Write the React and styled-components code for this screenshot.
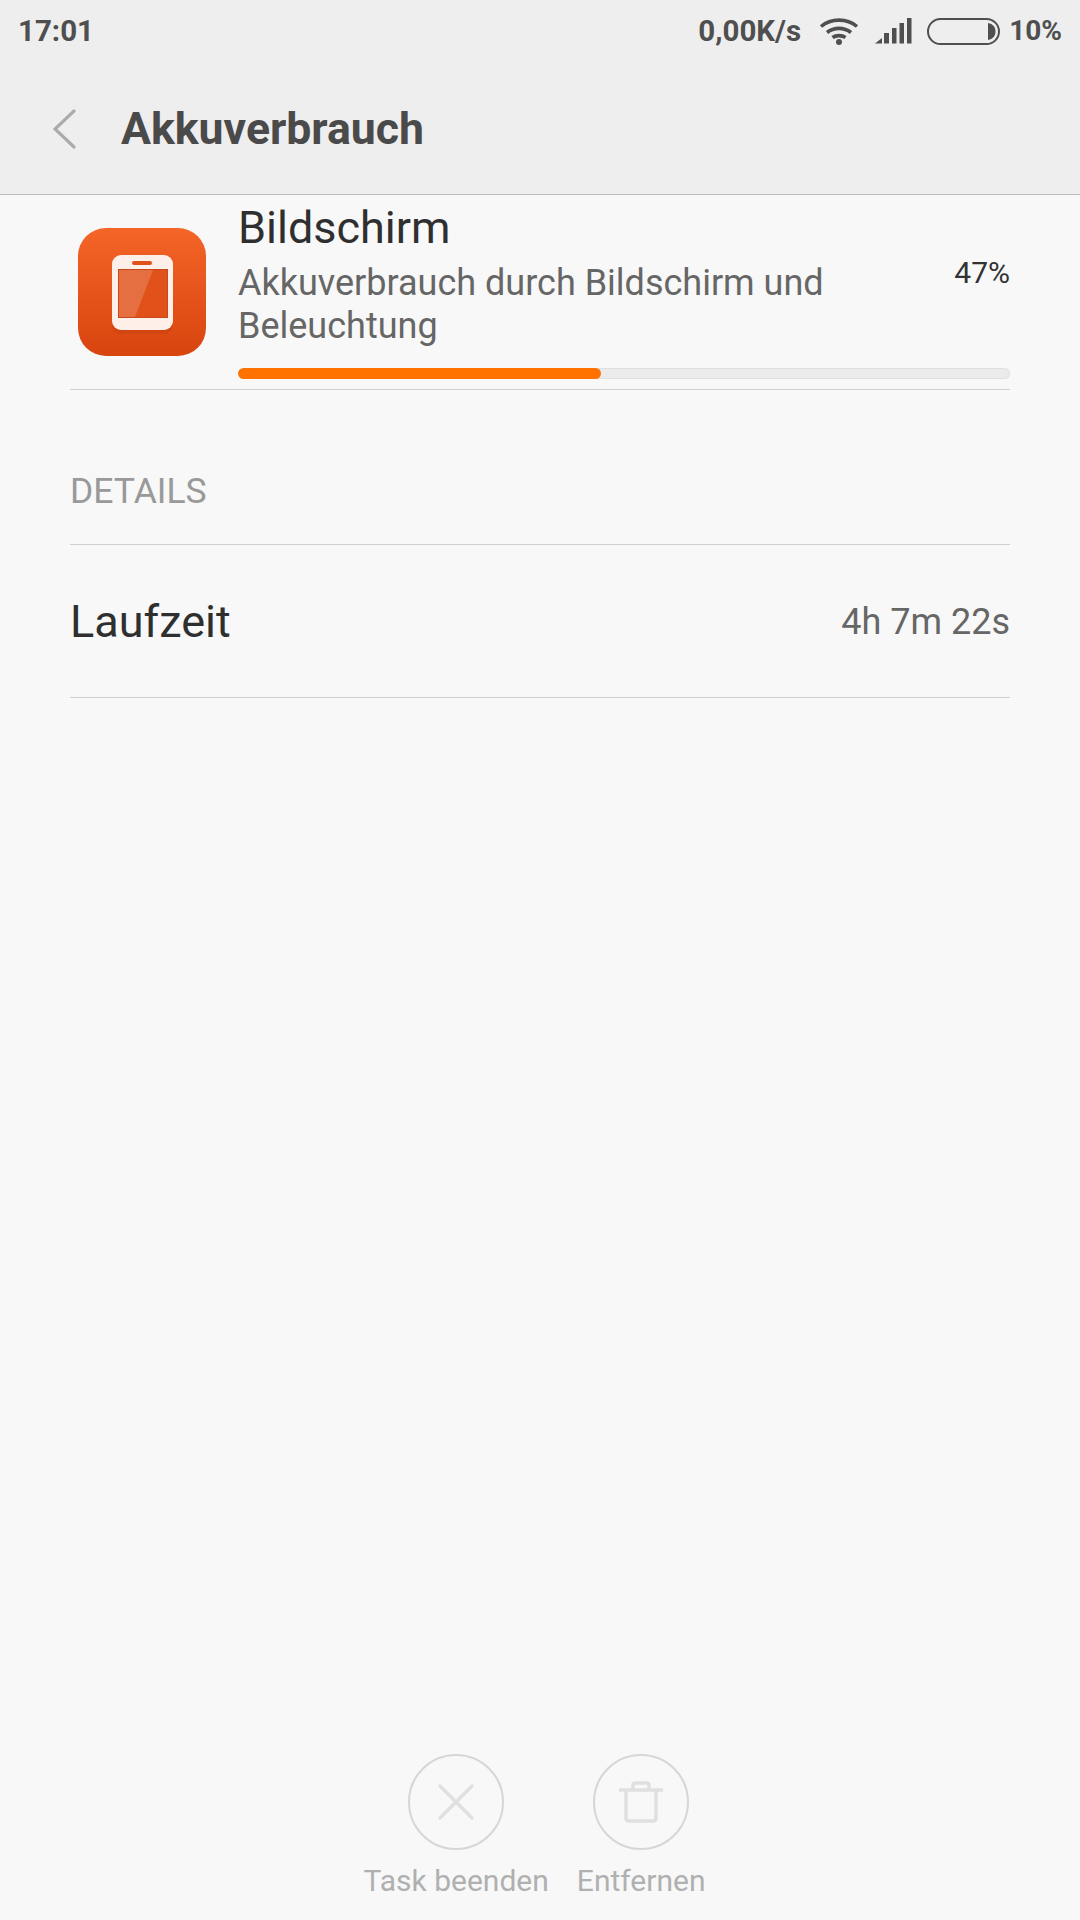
import React from "react";
import styled, { createGlobalStyle } from "styled-components";

const Global = createGlobalStyle`
  html, body { margin: 0; padding: 0; background: #f8f8f8; }
  #root { width: 1080px; height: 1920px; overflow: hidden; }
  * { box-sizing: border-box; }
`;
const Screen = styled.div`
  width: 1080px; height: 1920px; display: flex; flex-direction: column;
  background: #f8f8f8; font-family: Roboto, sans-serif;
`;
const Header = styled.header`
  height: 195px; flex: none; background: #eeeeee; border-bottom: 1px solid #bdbdbd;
  display: flex; flex-direction: column;
`;
const StatusBar = styled.div`
  height: 60px; display: flex; align-items: center; padding: 2px 18px 0 18px;
  color: #4f4f4f; font-size: 29px; font-weight: 700; line-height: 32px;
`;
const Time = styled.span`margin-right: auto; font-size: 29.500px;`;
const Speed = styled.span`margin-right: 18px; font-size: 29.500px;`;
const BatteryText = styled.span`font-size: 28px;`;
const StatusIcon = styled.svg`display: block; flex: none; margin-right: ${p => p.$gap}px;`;
const TitleBar = styled.div`
  flex: 1; display: flex; align-items: center; padding: 4px 0 0 53px;
`;
const BackIcon = styled.svg`display: block; flex: none;`;
const Title = styled.h1`
  margin: 0 0 0 45px; font-size: 44.600px; line-height: 50px; font-weight: 700; color: #4a4a4a;
`;
const Body = styled.main`flex: 1; padding: 0 70px; display: flex; flex-direction: column;`;
const AppRow = styled.section`
  height: 195px; display: flex; border-bottom: 1px solid #cfcfcf; padding-left: 8px; position: relative;
`;
const AppIcon = styled.svg`display: block; flex: none; margin: 33px 32px 0 0;`;
const AppInfo = styled.div`flex: 1; display: flex; flex-direction: column;`;
const AppHead = styled.div`display: flex; justify-content: space-between;`;
const AppText = styled.div`display: flex; flex-direction: column;`;
const AppName = styled.div`font-size: 45px; line-height: 50px; margin-top: 8px; color: #2f2f2f;`;
const AppDesc = styled.div`font-size: 36px; line-height: 43px; margin-top: 9px; color: #666666; width: 680px;`;
const Percent = styled.div`font-size: 30px; line-height: 34px; margin-top: 61px; color: #333333;`;
const Track = styled.div`
  height: 11px; margin-top: 20px; border-radius: 6px; background: #ebebeb;
  box-shadow: inset 0 0 0 1px #e0e0e0; overflow: hidden;
`;
const Fill = styled.div`height: 100%; border-radius: 6px; background: #ff7200;`;
const SectionLabel = styled.div`
  height: 155px; padding-bottom: 33px; display: flex; align-items: flex-end;
  border-bottom: 1px solid #cfcfcf; font-size: 35.500px; line-height: 40px; color: #999999;
`;
const InfoRow = styled.div`
  height: 153px; display: flex; align-items: center; justify-content: space-between;
  border-bottom: 1px solid #cfcfcf;
`;
const InfoLabel = styled.span`font-size: 45px; color: #2f2f2f;`;
const InfoValue = styled.span`font-size: 36px; margin-top: 2px; color: #666666;`;
const Footer = styled.footer`
  height: 167px; flex: none; display: flex; justify-content: center; gap: 28px;
  padding-top: 1px; margin-left: -11px;
`;
const Action = styled.div`display: flex; flex-direction: column; align-items: center;`;
const ActionCircle = styled.div`
  width: 96px; height: 96px; border-radius: 50%; border: 2px solid #d6d6d6;
  display: flex; align-items: center; justify-content: center;
`;
const ActionLabel = styled.div`font-size: 30px; line-height: 36px; margin-top: 13px; color: #b0b0b0;`;

function Wifi() {
  return (
    <StatusIcon $gap={16} width="40" height="28" viewBox="0 0 40 28" fill="none" stroke="#4f4f4f" strokeWidth="3.6">
      <path d="M2 9.500C12 1 28 1 38 9.500" />
      <path d="M8 15.500C15 10 25 10 32 15.500" />
      <path d="M13.500 20.500C17 18 23 18 26.500 20.500" />
      <circle cx="20" cy="25" r="3" fill="#4f4f4f" stroke="none" />
    </StatusIcon>
  );
}
function Signal() {
  return (
    <StatusIcon $gap={15} width="37" height="26" viewBox="0 0 37 26" fill="#4f4f4f">
      <path d="M0 25.500L7 20V25.500Z" />
      <rect x="9" y="15" width="5" height="10.500" />
      <rect x="17" y="10" width="4.500" height="15.500" />
      <rect x="24.500" y="5" width="4.500" height="20.500" />
      <rect x="32" y="0" width="4.500" height="25.500" />
    </StatusIcon>
  );
}
function Battery() {
  return (
    <StatusIcon $gap={9} width="73" height="27" viewBox="0 0 73 27" fill="none">
      <rect x="1" y="1" width="71" height="25" rx="12.500" stroke="#4f4f4f" strokeWidth="2" />
      <path d="M61 5C66 6 68.500 9 68.500 13.500S66 21 61 22Z" fill="#4f4f4f" />
    </StatusIcon>
  );
}
function ScreenIcon() {
  return (
    <AppIcon width="128" height="128" viewBox="0 0 128 128">
      <defs>
        <linearGradient id="bg" x1="0" y1="0" x2="0" y2="1">
          <stop offset="0" stopColor="#f46528" />
          <stop offset="1" stopColor="#d8440e" />
        </linearGradient>
      </defs>
      <rect width="128" height="128" rx="28" fill="url(#bg)" />
      <rect x="34" y="31" width="61" height="75" rx="9" fill="#b83a0a" opacity="0.28" />
      <rect x="34" y="27" width="61" height="75" rx="9" fill="#ffefe9" />
      <rect x="54" y="33" width="20" height="4" rx="2" fill="#e0521a" />
      <rect x="40.500" y="41.500" width="49" height="48" fill="#e0521a" stroke="#c9481a" strokeWidth="1" />
      <path d="M41 42H75L57 89H41Z" fill="#fff" opacity="0.17" />
    </AppIcon>
  );
}

export default function App() {
  return (
    <Screen>
      <Global />
      <Header>
        <StatusBar>
          <Time>17:01</Time>
          <Speed>0,00K/s</Speed>
          <Wifi />
          <Signal />
          <Battery />
          <BatteryText>10%</BatteryText>
        </StatusBar>
        <TitleBar>
          <BackIcon width="23" height="40" viewBox="0 0 23 40" fill="none" stroke="#ababab" strokeWidth="3.200" strokeLinecap="round">
            <path d="M21 2L2 20L21 38" />
          </BackIcon>
          <Title>Akkuverbrauch</Title>
        </TitleBar>
      </Header>
      <Body>
        <AppRow>
          <ScreenIcon />
          <AppInfo>
            <AppHead>
              <AppText>
                <AppName>Bildschirm</AppName>
                <AppDesc>Akkuverbrauch durch Bildschirm und Beleuchtung</AppDesc>
              </AppText>
              <Percent>47%</Percent>
            </AppHead>
            <Track><Fill style={{ width: "47%" }} /></Track>
          </AppInfo>
        </AppRow>
        <SectionLabel>DETAILS</SectionLabel>
        <InfoRow>
          <InfoLabel>Laufzeit</InfoLabel>
          <InfoValue>4h 7m 22s</InfoValue>
        </InfoRow>
      </Body>
      <Footer>
        <Action>
          <ActionCircle>
            <svg width="38" height="38" viewBox="0 0 38 38" fill="none" stroke="#e0e0e0" strokeWidth="3.400" strokeLinecap="round">
              <path d="M3 3L35 35M35 3L3 35" />
            </svg>
          </ActionCircle>
          <ActionLabel>Task beenden</ActionLabel>
        </Action>
        <Action>
          <ActionCircle>
            <svg width="44" height="42" viewBox="0 0 44 42" fill="none" stroke="#e0e0e0" strokeWidth="3.600">
              <path d="M0 9H44" />
              <path d="M7 9V37C7 39 8 40 10 40H34C36 40 37 39 37 37V9" />
              <path d="M14 9V4C14 2.500 15 2 16 2H28C29 2 30 2.500 30 4V9" />
            </svg>
          </ActionCircle>
          <ActionLabel>Entfernen</ActionLabel>
        </Action>
      </Footer>
    </Screen>
  );
}
